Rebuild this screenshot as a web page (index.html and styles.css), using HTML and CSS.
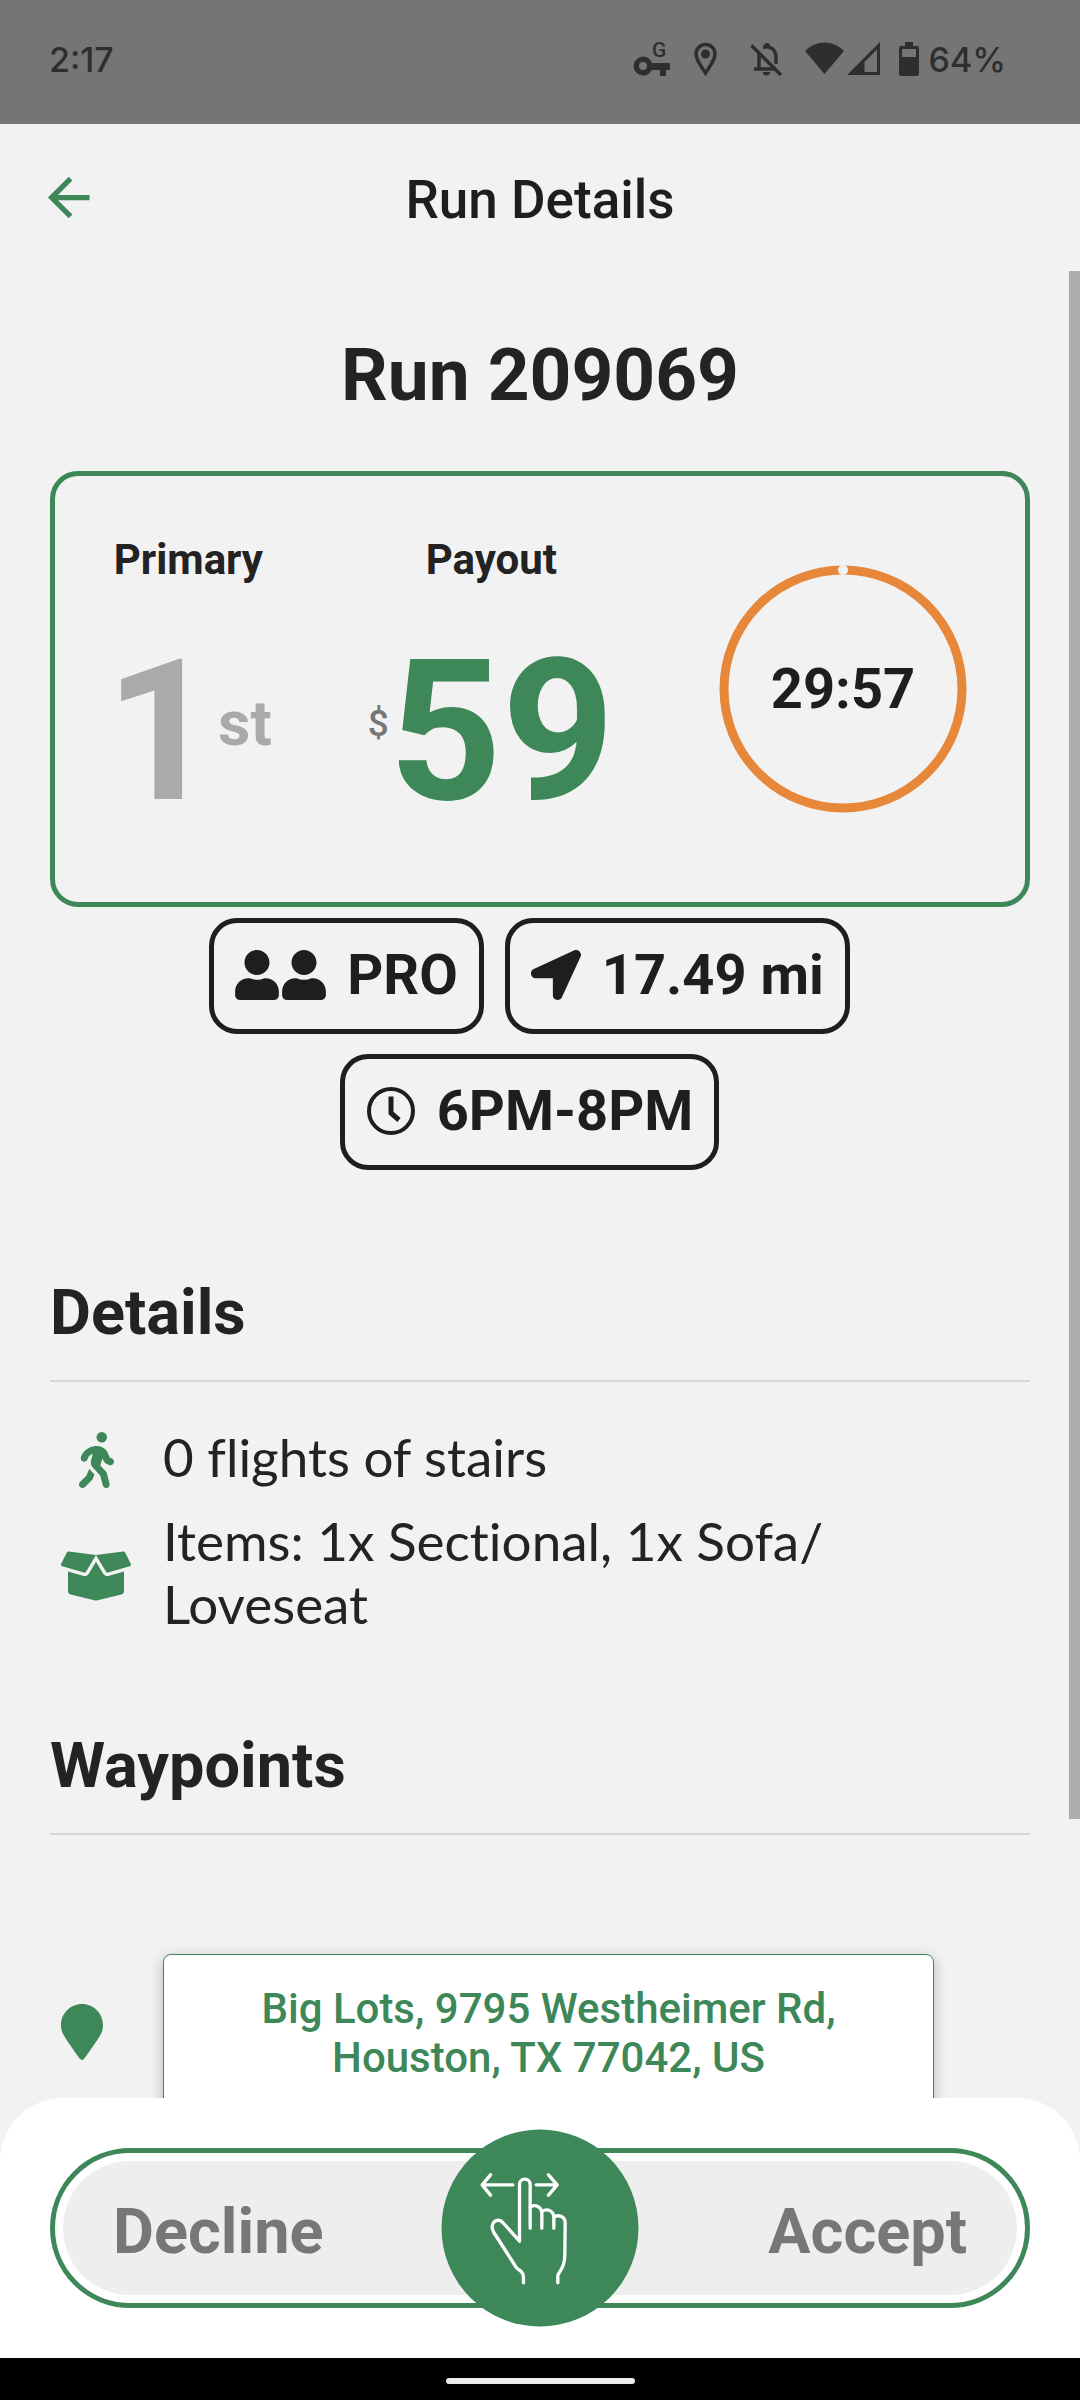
FILE: index.html
```html
<!DOCTYPE html>
<html lang="en">
<head>
  <meta charset="utf-8">
  <meta name="viewport" content="width=device-width">
  <title>Run Details</title>
  <link rel="stylesheet" href="styles.css">
</head>
<body>
  <div class="app">
    <div class="status-bar">
      <span class="clock">2:17</span>
      <div class="status-icons">
        <svg class="i-key" width="37" height="52" viewBox="0 -8 37 52">
          <text x="19" y="16" font-family="Roboto" font-size="21" font-weight="500">G</text>
          <path fill-rule="evenodd" d="M10 15.500a9.500 9.500 0 1 0 8.800 13.500H27v6h6v-6h4v-7H18.800A9.500 9.500 0 0 0 10 15.500zm0 5.500a4 4 0 1 1 0 8 4 4 0 0 1 0-8z"/>
        </svg>
        <svg class="i-place" width="23" height="36" viewBox="0 0 23 36">
          <path d="M11.500 3.500a9.500 9.500 0 0 0-9.500 9.500c0 6 5 12 9.500 19 4.500-7 9.500-13 9.500-19a9.500 9.500 0 0 0-9.500-9.500z" fill="none" stroke="#2e2e2e" stroke-width="3.500"/>
          <circle cx="11.500" cy="13" r="4.500"/>
        </svg>
        <svg class="i-bell" width="32" height="36" viewBox="0 0 32 36">
          <path d="M1.500 4.500L31 34M9 13v15M4 28h20M13 6.500C20 4 26 9 26 16v7" fill="none" stroke="#2e2e2e" stroke-width="3.500"/>
          <path d="M14 5a3 3 0 0 1 6 0v2h-6zM13 31h7a3.500 3.500 0 0 1-7 0z"/>
        </svg>
        <svg class="i-wifi" width="39" height="36" viewBox="0 0 39 36"><path d="M0 10C11-1.500 28-1.500 39 10L19.500 33z"/></svg>
        <svg class="i-signal" width="33" height="36" viewBox="0 0 33 36"><path fill-rule="evenodd" d="M33 1v33H0zM30 8.500L17.500 21v10H30z"/></svg>
        <svg class="i-battery" width="20" height="36" viewBox="0 0 20 36"><path fill-rule="evenodd" d="M6 1h8v4h4a2 2 0 0 1 2 2v26a2 2 0 0 1-2 2H2a2 2 0 0 1-2-2V7a2 2 0 0 1 2-2h4zM3 8v8h14V8z"/></svg>
        <span>64%</span>
      </div>
    </div>

    <header class="app-header">
      <button class="back" type="button" aria-label="Back">
        <svg width="63" height="63" viewBox="0 0 24 24"><path d="M20,11V13H8L13.500,18.500L12.080,19.920L4.160,12L12.080,4.080L13.500,5.500L8,11H20Z"/></svg>
      </button>
      <span class="app-title">Run Details</span>
    </header>

    <div class="body">
      <main class="content">
        <h1>Run 209069</h1>

        <section class="summary">
          <div class="stat">
            <span class="stat-label">Primary</span>
            <div class="stat-value"><span class="rank">1</span><span class="suffix">st</span></div>
          </div>
          <div class="stat">
            <span class="stat-label">Payout</span>
            <div class="stat-value"><span class="currency">$</span><span class="amount">59</span></div>
          </div>
          <div class="timer">
            <svg class="ring" width="248" height="248" viewBox="0 0 248 248">
              <circle cx="124" cy="124" r="119" fill="none" stroke="#e68739" stroke-width="9"/>
              <circle cx="124" cy="5" r="5" fill="#f2f2f2"/>
            </svg>
            <span class="time">29:57</span>
          </div>
        </section>

        <div class="chips">
          <div class="chip">
            <span class="people">
              <svg width="44" height="50" viewBox="0 0 448 512"><path d="M224 256c70.700 0 128-57.300 128-128S294.700 0 224 0 96 57.300 96 128s57.300 128 128 128zm89.600 32h-16.700c-22.200 10.200-46.900 16-72.900 16s-50.600-5.800-72.900-16h-16.700C60.200 288 0 348.200 0 422.400V464c0 26.500 21.500 48 48 48h352c26.500 0 48-21.500 48-48v-41.600c0-74.200-60.200-134.400-134.400-134.400z"/></svg>
              <svg width="44" height="50" viewBox="0 0 448 512"><path d="M224 256c70.700 0 128-57.300 128-128S294.700 0 224 0 96 57.300 96 128s57.300 128 128 128zm89.600 32h-16.700c-22.200 10.200-46.900 16-72.900 16s-50.600-5.800-72.900-16h-16.700C60.200 288 0 348.200 0 422.400V464c0 26.500 21.500 48 48 48h352c26.500 0 48-21.500 48-48v-41.600c0-74.200-60.200-134.400-134.400-134.400z"/></svg>
            </span>
            <span>PRO</span>
          </div>
          <div class="chip">
            <svg width="50" height="50" viewBox="0 0 512 512"><path d="M444.520 3.520L28.740 195.420c-47.970 22.390-31.980 92.750 19.190 92.750h175.910v175.910c0 51.170 70.360 67.170 92.750 19.190l191.900-415.780c15.990-38.380-25.590-79.970-63.970-63.970z"/></svg>
            <span>17.49 mi</span>
          </div>
          <div class="chip">
            <svg width="50" height="50" viewBox="0 0 50 50" fill="none" stroke="#1c1e1f"><circle cx="25" cy="25" r="22" stroke-width="4"/><path d="M25 10.500V27l8 7" stroke-width="5"/></svg>
            <span>6PM-8PM</span>
          </div>
        </div>

        <section>
          <h2>Details</h2>
          <ul class="details">
            <li>
              <span class="detail-icon"><svg width="35" height="56" viewBox="0 0 320 512"><path d="M160 48a48 48 0 1 1 96 0 48 48 0 1 1 -96 0zM126.500 199.300c-1 .4-1.900 .8-2.900 1.200l-8 3.500c-16.400 7.300-29 21.200-34.700 38.200l-2.600 7.800c-5.600 16.800-23.700 25.800-40.500 20.200s-25.800-23.700-20.200-40.500l2.600-7.800c11.400-34.100 36.600-61.900 69.400-76.500l8-3.500c20.800-9.200 43.300-14 66.100-14c44.600 0 84.800 26.800 101.900 67.900L281 232.700l21.400 10.700c15.800 7.900 22.200 27.100 14.300 42.900s-27.100 22.200-42.900 14.300L247 287.300c-10.300-5.200-18.400-13.800-22.800-24.500l-9.600-23-19.300 65.500 49.500 54c5.400 5.900 9.200 13 11.200 20.800l23 92.100c4.300 17.100-6.100 34.500-23.300 38.800s-34.500-6.100-38.800-23.300l-22-88.100-70.700-77.100c-14.800-16.100-20.300-38.600-14.700-59.700l16.900-63.500zM68.700 398l25-62.400c2.100 3 4.500 5.800 7 8.600l40.700 44.400-14.500 36.200c-2.400 6-6 11.500-10.600 16.100L54.600 502.600c-12.500 12.500-32.800 12.500-45.300 0s-12.500-32.800 0-45.300L68.700 398z"/></svg></span>
              <span>0 flights of stairs</span>
            </li>
            <li>
              <span class="detail-icon"><svg width="70" height="56" viewBox="0 0 640 512"><path d="M425.700 256c-16.900 0-32.800-9-41.400-23.400L320 126l-64.200 106.600c-8.700 14.500-24.600 23.500-41.500 23.500-4.500 0-9-.6-13.300-1.900L64 215v178c0 14.700 10 27.500 24.200 31l216.200 54.100c10.200 2.500 20.900 2.500 31 0L551.800 424c14.200-3.600 24.200-16.400 24.200-31V215l-137 39.100c-4.300 1.300-8.800 1.900-13.300 1.900zm212.600-112.200L586.800 41c-3.100-6.200-9.800-9.800-16.700-8.900L320 64l91.700 152.100c3.800 6.300 11.400 9.300 18.500 7.300l197.900-56.500c9.900-2.900 14.700-13.900 10.200-23.100zM53.200 41L1.700 143.800c-4.600 9.200.3 20.200 10.100 23l197.900 56.500c7.100 2 14.700-1 18.500-7.300L320 64 69.800 32.100c-6.900-.8-13.500 2.700-16.600 8.900z"/></svg></span>
              <span>Items: 1x Sectional, 1x Sofa/<wbr>Loveseat</span>
            </li>
          </ul>
        </section>

        <section>
          <h2>Waypoints</h2>
          <div class="waypoint">
            <svg class="pin" width="42" height="56" viewBox="0 0 384 512"><path d="M172.268 501.670C26.970 291.031 0 269.413 0 192 0 85.961 85.961 0 192 0s192 85.961 192 192c0 77.413-26.970 99.031-172.268 309.670-9.535 13.774-29.930 13.773-39.464 0z"/></svg>
            <a class="address" href="#map">Big Lots, 9795 Westheimer Rd, Houston, TX 77042, US</a>
          </div>
        </section>
      </main>
      <div class="scroll-thumb"></div>
    </div>

    <footer class="actions">
      <div class="slider">
        <button class="choice" type="button">Decline</button>
        <button class="choice" type="button">Accept</button>
        <button class="knob" type="button" aria-label="Swipe to decline or accept">
          <svg viewBox="65 90 591 591" fill="none" stroke="#fff" stroke-width="10" stroke-linecap="round" stroke-linejoin="round">
            <path d="M279 256H187M212 226L187 256 212 287M349 256H412M386 226L412 256 386 287"/>
            <path d="M299 425V255a16 16 0 0 1 32 0V386M299 425L249 369C232 351 207 371 222 399L290 505C304 515 311 520 311 534V550"/>
            <path d="M331 323C346 312 366 322 366 342V386M367 336C382 325 402 334 402 354V386M402 353C417 343 437 352 436 372L435 465C435 500 424 508 414 527V550"/>
          </svg>
        </button>
      </div>
    </footer>
    <div class="nav-bar"><span class="nav-handle"></span></div>
  </div>
</body>
</html>
```
FILE: styles.css
```css
:root {
  --green: #3d8759;
  --ink: #232323;
  --black: #1c1e1f;
  --page: #f2f2f2;
}

* { box-sizing: border-box; }

body {
  margin: 0;
  background: var(--page);
  color: var(--ink);
  font-family: Roboto, sans-serif;
}

button {
  border: 0;
  padding: 0;
  background: none;
  font-family: inherit;
  cursor: pointer;
}

svg { display: block; flex: none; }

.app {
  display: flex;
  flex-direction: column;
  height: 100vh;
}

/* System status bar */
.status-bar {
  flex: none;
  display: flex;
  justify-content: space-between;
  align-items: center;
  height: 124px;
  padding: 0 74px 6px 49px;
  background: #757575;
  color: #2e2e2e;
  fill: #2e2e2e;
  font-family: Inter, sans-serif;
  font-size: 34px;
  font-weight: 500;
}
.status-icons { display: flex; align-items: center; }
.i-key { margin-right: 24px; }
.i-place { margin-right: 33px; }
.i-bell { margin-right: 23px; }
.i-wifi { margin-right: 3px; }
.i-signal { margin-right: 19px; }
.i-battery { margin-right: 10px; }

/* Title bar */
.app-header {
  flex: none;
  display: grid;
  grid-template-columns: 63px 1fr 63px;
  align-items: center;
  height: 147px;
  padding: 0 37px;
}
.back svg { fill: var(--green); }
.app-title {
  padding-top: 4px;
  color: var(--black);
  font-size: 53px;
  font-weight: 500;
  line-height: 64px;
  text-align: center;
}

/* Scrolling content */
.body {
  position: relative;
  flex: 1;
  min-height: 0;
}
.content {
  height: 100%;
  padding: 62px 50px 0;
  overflow-y: auto;
  scrollbar-width: none;
}
.scroll-thumb {
  position: absolute;
  top: 0;
  right: 0;
  width: 11px;
  height: 1548px;
  background: #aeaeae;
}

h1 {
  margin: 0 0 54px;
  font-size: 73px;
  line-height: 84px;
  text-align: center;
}
h2 {
  margin: 84px 0 0;
  padding-bottom: 30px;
  border-bottom: 2px solid #d6d8d7;
  font-size: 63px;
  line-height: 74px;
}

.summary {
  display: flex;
  justify-content: space-between;
  align-items: center;
  padding: 60px 58px 70px 50px;
  border: 5px solid var(--green);
  border-radius: 28px;
}
.stat {
  display: flex;
  flex-direction: column;
  align-items: center;
  gap: 48px;
  font-weight: 700;
}
.stat-label { font-size: 42px; line-height: 48px; }
.stat-value { display: flex; align-items: center; }
.rank, .amount { font-size: 197px; line-height: 200px; }
.rank, .suffix { color: #aaa; }
.amount { color: var(--green); }
.suffix { padding-bottom: 16px; font-size: 63px; line-height: 72px; }
.currency {
  padding-bottom: 16px;
  color: #777;
  font-size: 37px;
  font-weight: 500;
  line-height: 48px;
}
.timer { display: grid; place-items: center; margin: 10px 0 0 8px; }
.ring, .time { grid-area: 1 / 1; }
.time { color: var(--black); font-size: 56px; font-weight: 700; line-height: 66px; }

.chips {
  display: flex;
  flex-wrap: wrap;
  justify-content: center;
  margin-top: 11px;
}
.chip {
  display: flex;
  align-items: center;
  gap: 21px;
  margin: 0 21px 20px 0;
  padding: 19px 21px 21px;
  border: 5px solid var(--black);
  border-radius: 28px;
  color: var(--black);
  fill: var(--black);
  font-size: 56px;
  font-weight: 700;
  line-height: 66px;
}
.people { display: flex; gap: 3px; }
.chips + section { margin-top: 86px; }

.details {
  display: flex;
  flex-direction: column;
  gap: 21px;
  margin: 0;
  padding: 43px 21px 10px 0;
  list-style: none;
  font-family: Lato, sans-serif;
  font-size: 53px;
  font-variant-ligatures: none;
  line-height: 63px;
}
.details li { display: flex; align-items: center; gap: 21px; }
.detail-icon {
  flex: none;
  display: flex;
  justify-content: center;
  width: 92px;
  padding-top: 7px;
  fill: var(--green);
}

.waypoint {
  display: flex;
  gap: 60px;
  padding: 119px 96px 60px 11px;
}
.pin { margin-top: 50px; fill: var(--green); }
.address {
  flex: 1;
  padding: 29px 80px 60px;
  border: 1px solid var(--green);
  border-radius: 8px;
  background: #fff;
  box-shadow: 0 4px 14px rgba(0, 0, 0, 0.25);
  color: var(--green);
  font-size: 42px;
  font-weight: 500;
  line-height: 49px;
  text-align: center;
  text-decoration: none;
}

/* Decline / accept slider */
.actions {
  flex: none;
  padding: 50px;
  border-radius: 63px 63px 0 0;
  background: #fff;
}
.slider {
  position: relative;
  display: flex;
  justify-content: space-between;
  height: 160px;
  padding: 0 58px;
  border: 5px solid var(--green);
  border-radius: 80px;
  background: #eee;
  box-shadow: inset 0 0 0 8px #fff;
}
.choice {
  padding-top: 6px;
  color: #777;
  font-size: 63px;
  font-weight: 700;
}
.knob {
  position: absolute;
  top: 50%;
  left: 50%;
  width: 197px;
  height: 197px;
  border-radius: 50%;
  background: var(--green);
  transform: translate(-50%, -50%);
}

/* System navigation bar */
.nav-bar {
  flex: none;
  display: flex;
  justify-content: center;
  height: 42px;
  padding-top: 20px;
  background: #000;
}
.nav-handle { width: 189px; height: 6px; border-radius: 3px; background: #ececec; }
```
